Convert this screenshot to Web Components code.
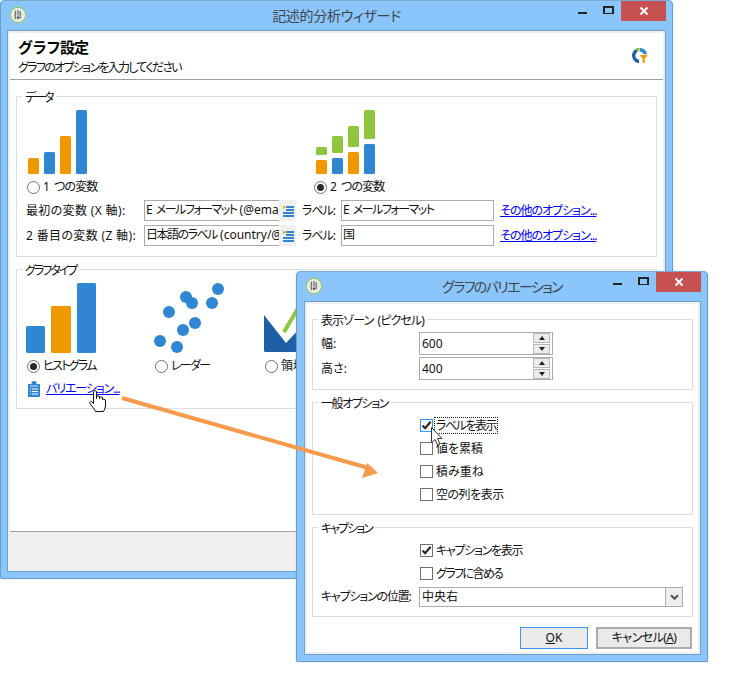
<!DOCTYPE html>
<html lang="ja"><head><meta charset="utf-8"><title>記述的分析ウィザード</title>
<style>
html,body{margin:0;background:#fff}
body{font:12px/16px "Noto Sans","Noto Sans CJK JP",sans-serif;font-feature-settings:"palt";color:#111}
</style></head><body>
<x-scene>
  <x-window title-text="記述的分析ウィザード" title-ls="-.3px" style="left:0;top:0;width:673px;height:579px">
    <x-wizard></x-wizard>
  </x-window>
  <x-window title-text="グラフのバリエーション" title-ls="-1.6px" style="left:296px;top:271px;width:412px;height:391px;--ml:7px">
    <x-variation></x-variation>
  </x-window>
  <x-overlay></x-overlay>
</x-scene>
<script>
function def(name, css, html){
  customElements.define(name, class extends HTMLElement{
    connectedCallback(){
      if(this.shadowRoot) return;
      const r=this.attachShadow({mode:'open'});
      const h=typeof html==='function'?html(this):html;
      r.innerHTML='<style>'+css+'</style>'+h;
    }
  });
}
const attr=(e,n,d='')=>e.hasAttribute(n)?e.getAttribute(n):d;

def('x-scene',':host{display:block;position:relative;width:734px;height:682px;overflow:hidden}','<slot></slot>');

const appIcon=`<svg width="18" height="18" viewBox="0 0 18 18"><circle cx="9" cy="9" r="7.6" fill="#f2f4ef" stroke="#9dc46a" stroke-width="1.1"/><circle cx="9" cy="9" r="5.6" fill="#dfe3e0"/><path d="M6.4 4.6v8.6M9 4v5.5M11.2 5.2v7.4" stroke="#777" stroke-width="1.3" fill="none"/><circle cx="9" cy="11.6" r="1.2" fill="#444"/></svg>`;

def('x-window',`
:host{display:flex;flex-direction:column;position:absolute;box-sizing:border-box;background:#8ac5fb;border:1px solid #6a9ccb;border-radius:5px 5px 2px 2px;border-top-color:#7aa7d3;box-shadow:0 0 1px #6a9ccb}
.bar{display:grid;grid-template-columns:1fr auto 1fr;height:29px;flex:none}
.ic{padding:5px 0 0 8px;height:18px}
.t{font-size:14px;line-height:29px;color:#3f4448;white-space:nowrap}
.ctl{display:flex;justify-content:flex-end;align-items:flex-start;margin-right:6px}
.b{width:26px;height:20px;display:flex;align-items:center;justify-content:center}
.m{width:9px;height:2px;background:#222;margin-top:4px}
.x{height:5px;width:7px;border:2px solid #222;border-bottom-width:1px;margin-top:-3px}
.c{width:45px;height:20px;background:#c75050;display:flex;align-items:center;justify-content:center}
.client{flex:1;min-height:0;margin:0 6px 6px var(--ml,6px);border:1px solid #6d9ecd;display:flex;flex-direction:column;background:#fff}
.inner{flex:1;min-height:0;border:2px solid #f0f0f0;display:flex;flex-direction:column}
`,e=>`<div class="bar"><div class="ic">${appIcon}</div><div class="t" style="letter-spacing:${attr(e,'title-ls','0')}">${attr(e,'title-text')}</div>
<div class="ctl"><div class="b"><div class="m"></div></div><div class="b"><div class="x"></div></div><div class="c"><svg width="10" height="10" viewBox="0 0 10 10"><path d="M1.5 1.5l7 7M8.500 1.500l-7 7" stroke="#fff" stroke-width="2"/></svg></div></div></div>
<div class="client"><div class="inner"><slot></slot></div></div>`);

def('x-group',`
:host{display:block;box-sizing:border-box;border:1px solid #dcdcdc;background:#fff}
.l{width:fit-content;margin:-7px 0 0 5px;padding:0 3px;background:#fff;line-height:16px;height:16px;white-space:nowrap;word-spacing:2px}
`,e=>`<div class="l" style="letter-spacing:${attr(e,'ls','0')}">${attr(e,'legend')}</div><slot></slot>`);

def('x-radio',`
:host{display:inline-flex;align-items:center;gap:3px;height:14px;white-space:nowrap}
.r{width:11px;height:11px;border:1px solid #707070;border-radius:50%;display:flex;align-items:center;justify-content:center;background:#fff;flex:none}
.d{width:7px;height:7px;border-radius:50%;background:#2a2a2a}
`,e=>`<span class="r">${e.hasAttribute('checked')?'<span class="d"></span>':''}</span><span><slot></slot></span>`);

def('x-check',`
:host{display:flex;align-items:center;gap:3px;height:13px;white-space:nowrap}
.c{width:11px;height:11px;border:1px solid #707070;background:#fff;flex:none;display:flex;align-items:center;justify-content:center}
:host([focused]) .c{border-color:#3399ff}
.t{line-height:15px}
:host([focused]) .t{outline:1px dotted #222;padding:0 1px;margin-left:-1px}
`,e=>`<span class="c">${e.hasAttribute('checked')?'<svg width="11" height="11" viewBox="0 0 11 11"><path d="M1.6 5.6l2.6 2.6L9.6 1.8" fill="none" stroke="#2a2a2a" stroke-width="2.2"/></svg>':''}</span><span class="t"><slot></slot></span>`);

const listIcon=`<svg width="12" height="12" viewBox="0 0 12 12"><path d="M4 2h8M4 5h8M1 8h11M1 11h11" stroke="#2f86d2" stroke-width="1.8"/><path d="M2 .6l.6 1 1.1.2-.8.8.2 1.1-1-.5-1 .5.1-1.1-.7-.8 1-.2z" fill="#f09800"/></svg>`;

def('x-field',`
:host{display:flex;height:21px;min-width:0}
.t{flex:1;min-width:0;box-sizing:border-box;border:1px solid #ababab;padding:0 0 0 1px;line-height:17px;overflow:hidden;white-space:nowrap;background:#fff}
:host([picker]) .t{border-right:0}
.p{width:17px;background:#f0f0f0;display:flex;align-items:center;justify-content:center;flex:none}
`,e=>`<div class="t"><slot></slot></div>${e.hasAttribute('picker')?`<div class="p">${listIcon}</div>`:''}`);

def('x-spin',`
:host{display:flex;box-sizing:border-box;height:23px;width:134px;border:1px solid #ababab;background:#fff;align-items:center}
.t{flex:1;padding-left:2px}
.s{display:flex;flex-direction:column;gap:1px;margin-right:1px;padding:1px}
.a{width:15px;height:8px;background:#ececec;border:1px solid #b8b8b8;display:flex;align-items:center;justify-content:center}
i{display:block;width:0;height:0;border-left:3px solid transparent;border-right:3px solid transparent}
.u{border-bottom:4px solid #222}.v{border-top:4px solid #222}
`,`<div class="t"><slot></slot></div><div class="s"><div class="a"><i class="u"></i></div><div class="a"><i class="v"></i></div></div>`);

def('x-select',`
:host{display:flex;box-sizing:border-box;height:20px;border:1px solid #ababab;background:#fff;align-items:center}
.t{flex:1;padding-left:2px}
.a{width:16px;height:18px;background:#eee;border-left:1px solid #ababab;display:flex;align-items:center;justify-content:center}
`,`<div class="t"><slot></slot></div><div class="a"><svg width="9" height="7" viewBox="0 0 9 7"><path d="M1 1.2l3.5 3.6L8 1.2" fill="none" stroke="#555" stroke-width="2"/></svg></div>`);

def('x-btn',`
:host{display:flex;align-items:center;justify-content:center;box-sizing:border-box;height:22px;background:#eaeaea;border:1px solid #acacac;outline:1px solid #acacac;outline-offset:-2px;white-space:nowrap}
:host([default]){border-color:#3399ff;outline:0}
`,`<slot></slot>`);

const R=(x,y,w,h,f)=>`<rect x="${x}" y="${y}" width="${w}" height="${h}" rx="1.5" fill="${f}"/>`;
const B='#2f86d2',O='#f09800',G='#8fc63d';

def('x-wizard',`
:host{display:flex;flex-direction:column;flex:1;min-height:0}
.head{display:flex;justify-content:space-between;align-items:flex-start;height:46px;padding:0 15px 0 8px;box-sizing:border-box;flex:none}
h1{margin:4px 0 0;font:700 15px/20px "Noto Sans","Noto Sans CJK JP",sans-serif;color:#000;letter-spacing:-1px}
p{margin:3px 0 0;line-height:16px;letter-spacing:-1.7px}
.logo{margin-top:14px}
.sep{height:1px;background:#a0a0a0;flex:none}
.body{flex:1;padding:16px 6px 0 6px;display:flex;flex-direction:column;gap:12px;min-height:0}
.data{height:161px;flex:none}
.charts{display:grid;grid-template-columns:288px auto;padding:4px 0 0 10px}
.cell{display:flex;flex-direction:column;align-items:flex-start;gap:6px}
.cell svg{display:block;margin-left:1px}
.cell x-radio{letter-spacing:-.9px;word-spacing:3px}
.cell+.cell x-radio{margin-left:-1px}
.rows{display:grid;grid-template-columns:118px 152px 45px 153px auto;grid-auto-rows:21px;row-gap:4px;padding:6px 0 0 9px;align-items:center}
.rows>span{white-space:nowrap;letter-spacing:.35px}
.rows>span.lab{margin-left:6px;letter-spacing:-1px}
.k{letter-spacing:-1.5px;word-spacing:3px}
a{color:#0000ff;text-decoration:underline;margin-left:6px;white-space:nowrap;letter-spacing:-1px}
.type{height:140px;flex:none}
.gcols{display:grid;grid-template-columns:128px 110px auto;padding:4px 0 0 9px}
.gc{display:flex;flex-direction:column;align-items:flex-start;gap:6px;letter-spacing:-1.7px}
.gc svg{display:block}
.gc x-radio{margin-left:1px}
.var{display:flex;align-items:center;gap:6px;margin:8px 0 0 11px}
.var a{margin:0;letter-spacing:-1.1px}
.foot{height:38px;flex:none;background:#f0f0f0;border-top:1px solid #a0a0a0;box-sizing:border-box}
`,`<div class="head"><div><h1>グラフ設定</h1><p>グラフのオプションを入力してください</p></div>
<svg class="logo" width="17" height="17" viewBox="0 0 17 17"><path d="M8.500 1A7.500 7.500 0 0 0 1 8.500 7.500 7.500 0 0 0 8 16V12.600A4.200 4.200 0 0 1 4.300 8.500 4.200 4.200 0 0 1 6 5.200z" fill="#1f5fa6"/><path d="M6.400 4.900 4.600 2.100A7.500 7.500 0 0 1 8.500 1V4.300A4 4 0 0 0 6.400 4.900z" fill="#8fc63d"/><path d="M9 1a7.500 7.500 0 0 1 7 6.200h-3.400A4.200 4.200 0 0 0 9 4.400z" fill="#2f86d2"/><path d="M8.600 8h8.200l-3 3.600V16h-2.200v-4.400z" fill="#f09800"/></svg></div>
<div class="sep"></div>
<div class="body">
<x-group class="data" legend="データ" ls="-2px">
  <div class="charts">
    <div class="cell"><svg width="60" height="64" viewBox="0 0 60 64">${R(0,48,11,16,O)+R(16,42,11,22,B)+R(32,26,11,38,O)+R(48,0,11,64,B)}</svg><x-radio>1 つの変数</x-radio></div>
    <div class="cell"><svg width="60" height="64" viewBox="0 0 60 64">${R(0,37,11,8,G)+R(0,50,11,14,O)+R(16,26,11,17,G)+R(16,48,11,16,B)+R(32,16,11,21,G)+R(32,42,11,22,O)+R(48,0,11,29,G)+R(48,34,11,30,B)}</svg><x-radio checked>2 つの変数</x-radio></div>
  </div>
  <div class="rows">
    <span>最初の変数 (X 軸):</span><x-field picker><span class="k">E メールフォーマット</span> (@ema</x-field><span class="lab">ラベル:</span><x-field><span class="k">E メールフォーマット</span></x-field><a>その他のオプション...</a>
    <span>2 番目の変数 (Z 軸):</span><x-field picker><span class="k">日本語のラベル</span> (country/@</x-field><span class="lab">ラベル:</span><x-field>国</x-field><a>その他のオプション...</a>
  </div>
</x-group>
<x-group class="type" legend="グラフタイプ" ls="-2px">
  <div class="gcols">
    <div class="gc"><svg width="71" height="70" viewBox="0 0 71 70">${R(0,43,19,27,B)+R(25,23,20,47,O)+R(51,0,19,70,B)}</svg><x-radio checked>ヒストグラム</x-radio></div>
    <div class="gc"><svg width="71" height="70" viewBox="0 0 71 70"><g fill="${B}"><circle cx="6" cy="58" r="6"/><circle cx="23" cy="64" r="6"/><circle cx="29" cy="47" r="6"/><circle cx="41" cy="40" r="6"/><circle cx="15" cy="29" r="6"/><circle cx="32" cy="14" r="6"/><circle cx="38" cy="20" r="6"/><circle cx="58" cy="20" r="6"/><circle cx="64" cy="6" r="6"/></g></svg><x-radio>レーダー</x-radio></div>
    <div class="gc"><svg width="60" height="70" viewBox="0 0 60 70"><path d="M0 32 22 60 60 20V69H1.500Q0 69 0 67.500Z" fill="#1f5fa6"/><path d="M20 49 33 27 38 33 60 4" fill="none" stroke="${G}" stroke-width="4"/></svg><x-radio style="letter-spacing:0">領域</x-radio></div>
  </div>
  <div class="var"><svg width="12" height="16" viewBox="0 0 12 16"><path d="M0 3h3.500V1.500Q3.500 0 6 0T8.500 1.500V3H12V16H0z" fill="#2f86d2"/><path d="M2 5h8" stroke="#cfe4f6"/><path d="M2 8h1M4 8h6M2 10.500h1M4 10.500h6M2 13h1M4 13h6" stroke="#fff"/></svg><a>バリエーション...</a></div>
</x-group>
</div>
<div class="foot"></div>`);

def('x-variation',`
:host{display:flex;flex-direction:column;flex:1;padding:0 5px;min-height:0}
x-group{margin-top:12px;flex:none}
.g1{margin-top:15px;height:71px}
.g2{height:113px}.g3{height:90px}
.grid{display:grid;grid-template-columns:98px 134px;row-gap:2px;padding:3px 0 0 8px;align-items:center}
.checks{display:flex;flex-direction:column;gap:10px;padding:7px 0 0 107px}
.pos{display:grid;grid-template-columns:98px 264px;padding:7px 0 0 8px;align-items:center}
.pos span{white-space:nowrap;letter-spacing:-1.2px}
.btns{display:flex;justify-content:flex-end;gap:8px;margin-top:10px;padding-right:1px}
u{text-decoration:underline}
`,`<x-group class="g1" legend="表示ゾーン (ピクセル)" ls="-.9px"><div class="grid"><span>幅:</span><x-spin>600</x-spin><span>高さ:</span><x-spin>400</x-spin></div></x-group>
<x-group class="g2" legend="一般オプション" ls="-1.4px"><div class="checks"><x-check checked focused style="letter-spacing:-1.5px">ラベルを表示</x-check><x-check>値を累積</x-check><x-check>積み重ね</x-check><x-check style="letter-spacing:-.5px">空の列を表示</x-check></div></x-group>
<x-group class="g3" legend="キャプション" ls="-2px"><div class="checks"><x-check checked style="letter-spacing:-1.3px">キャプションを表示</x-check><x-check style="letter-spacing:-1.6px">グラフに含める</x-check></div><div class="pos"><span>キャプションの位置:</span><x-select>中央右</x-select></div></x-group>
<div class="btns"><x-btn default style="width:68px"><span><u>O</u>K</span></x-btn><x-btn style="width:96px"><span style="letter-spacing:-.6px">キャンセル(<u>A</u>)</span></x-btn></div>`);

def('x-overlay',`:host{position:absolute;inset:0;display:block;pointer-events:none}svg{position:absolute;left:0;top:0}`,
`<svg width="734" height="682" viewBox="0 0 734 682">
<path d="M122 398 372 469" stroke="#f79a4b" stroke-width="4" fill="none"/>
<path d="M378 473 367 463 362 478z" fill="#f79a4b"/>
<path d="M431.500 427.500V442.500L435 439.500 437.500 445 440 444 437.500 438.500H442z" fill="#fff" stroke="#333" stroke-width="1"/>
<path d="M93.500 397V391.500Q95 389.500 96.500 391.500V398.500V396.500Q98 395 99.500 396.500V399V397.500Q101 396 102.500 397.500V399.500Q104 398.500 105.500 400V406Q105 409 103.500 411.500H95.500Q94 408 91 405L89.500 402.500Q90.500 400.500 92 402L93.500 403.500z" fill="#fff" stroke="#111" stroke-width="1"/>
</svg>`);
</script>
</body></html>
